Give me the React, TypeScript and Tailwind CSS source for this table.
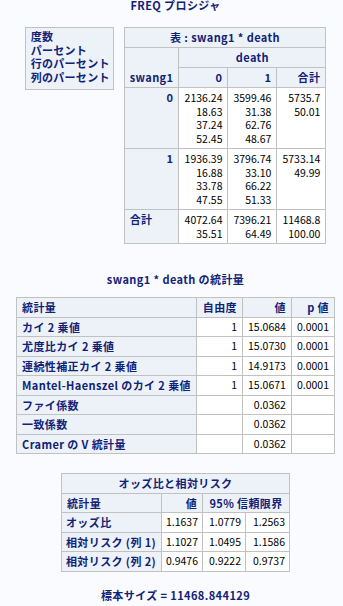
import React from 'react';

const HEAD = 'border border-[#c1c1c1] bg-[#edf2f9] text-[#112277] font-bold tracking-[0.4px] px-[5px] py-[3px] align-top whitespace-nowrap';
const DATA = 'border border-[#c1c1c1] bg-white text-black text-[10.5px] px-[5px] py-[3px] text-right align-top whitespace-nowrap';

const legend = ['度数', 'パーセント', '行のパーセント', '列のパーセント'];

const crossRows = [
  { label: '0', cells: [['2136.24', '18.63', '37.24', '52.45'], ['3599.46', '31.38', '62.76', '48.67'], ['5735.7', '50.01']] },
  { label: '1', cells: [['1936.39', '16.88', '33.78', '47.55'], ['3796.74', '33.10', '66.22', '51.33'], ['5733.14', '49.99']] },
];

const stats = [
  ['カイ 2 乗値', '1', '15.0684', '0.0001'],
  ['尤度比カイ 2 乗値', '1', '15.0730', '0.0001'],
  ['連続性補正カイ 2 乗値', '1', '14.9173', '0.0001'],
  ['Mantel-Haenszel のカイ 2 乗値', '1', '15.0671', '0.0001'],
  ['ファイ係数', '', '0.0362', ''],
  ['一致係数', '', '0.0362', ''],
  ['Cramer の V 統計量', '', '0.0362', ''],
];

const odds = [
  ['オッズ比', '1.1637', '1.0779', '1.2563'],
  ['相対リスク (列 1)', '1.1027', '1.0495', '1.1586'],
  ['相対リスク (列 2)', '0.9476', '0.9222', '0.9737'],
];

const Lines: React.FC<{ items: string[] }> = ({ items }) => (
  <>
    {items.map((t, i) => (
      <div key={i}>{t}</div>
    ))}
  </>
);

export default function App() {
  return (
    <div className="min-h-screen bg-[#fafbfe] pl-[8px] text-[11px] font-['Noto_Sans_CJK_JP','Noto_Sans',sans-serif]">
      <div className="text-center font-bold tracking-[0.4px] text-[#112277] leading-[11px]">FREQ プロシジャ</div>

      {/* crosstab with legend */}
      <div className="mt-[16px] flex items-start justify-center gap-[10px]">
        <div className="w-[89px] shrink-0 whitespace-nowrap border border-[#c1c1c1] bg-[#edf2f9] pl-[5px] pr-[2px] pt-[2px] pb-[4px] font-bold tracking-[0.3px] leading-[13.7px] text-[#112277]">
          <Lines items={legend} />
        </div>
        <table className="border-collapse leading-[13.5px]">
          <tbody>
            <tr>
              <td colSpan={4} className={`${HEAD} text-center !leading-[13px]`}>表 : swang1 * death</td>
            </tr>
            <tr>
              <td rowSpan={2} className={`${HEAD} w-[51px] !align-bottom`}>swang1</td>
              <td colSpan={3} className={`${HEAD} text-center !leading-[13px]`}>death</td>
            </tr>
            <tr>
              <td className={`${HEAD} w-[49px] text-right !leading-[13px]`}>0</td>
              <td className={`${HEAD} w-[48px] text-right !leading-[13px]`}>1</td>
              <td className={`${HEAD} w-[49px] text-right !leading-[13px]`}>合計</td>
            </tr>
            {crossRows.map(r => (
              <tr key={r.label}>
                <td className={`${HEAD} text-right`}>{r.label}</td>
                {r.cells.map((c, i) => (
                  <td key={i} className={DATA}>
                    <Lines items={c} />
                  </td>
                ))}
              </tr>
            ))}
            <tr>
              <td className={HEAD}>合計</td>
              <td className={DATA}><Lines items={['4072.64', '35.51']} /></td>
              <td className={DATA}><Lines items={['7396.21', '64.49']} /></td>
              <td className={DATA}><Lines items={['11468.8', '100.00']} /></td>
            </tr>
          </tbody>
        </table>
      </div>

      <div className="mt-[29px] text-center font-bold tracking-[0.4px] text-[#112277] leading-[13px]">swang1 * death の統計量</div>

      {/* statistics */}
      <div className="mt-[11px] flex justify-center">
        <table className="border-collapse leading-[12.5px]">
          <tbody>
            <tr>
              <td className={`${HEAD} w-[180px]`}>統計量</td>
              <td className={`${HEAD} w-[46px] text-right`}>自由度</td>
              <td className={`${HEAD} w-[48px] text-right`}>値</td>
              <td className={`${HEAD} w-[43px] text-right`}>p 値</td>
            </tr>
            {stats.map(s => (
              <tr key={s[0]}>
                <td className={HEAD}>{s[0]}</td>
                <td className={DATA}>{s[1]}</td>
                <td className={DATA}>{s[2]}</td>
                <td className={DATA}>{s[3]}</td>
              </tr>
            ))}
          </tbody>
        </table>
      </div>

      {/* odds ratio */}
      <div className="mt-[19px] flex justify-center">
        <table className="border-collapse leading-[12.5px]">
          <tbody>
            <tr>
              <td colSpan={4} className={`${HEAD} text-center`}>オッズ比と相対リスク</td>
            </tr>
            <tr>
              <td className={`${HEAD} w-[100px]`}>統計量</td>
              <td className={`${HEAD} w-[41px] text-right`}>値</td>
              <td colSpan={2} className={`${HEAD} text-center`}>95% 信頼限界</td>
            </tr>
            {odds.map(o => (
              <tr key={o[0]}>
                <td className={`${HEAD} !px-[4px]`}>{o[0]}</td>
                <td className={`${DATA} !px-[4px]`}>{o[1]}</td>
                <td className={`${DATA} w-[43px] !px-[4px]`}>{o[2]}</td>
                <td className={`${DATA} w-[44px] !px-[4px]`}>{o[3]}</td>
              </tr>
            ))}
          </tbody>
        </table>
      </div>

      <div className="mt-[17px] pb-[4px] text-center font-bold tracking-[0.4px] text-[#112277] leading-[13px]">標本サイズ = 11468.844129</div>
    </div>
  );
}
